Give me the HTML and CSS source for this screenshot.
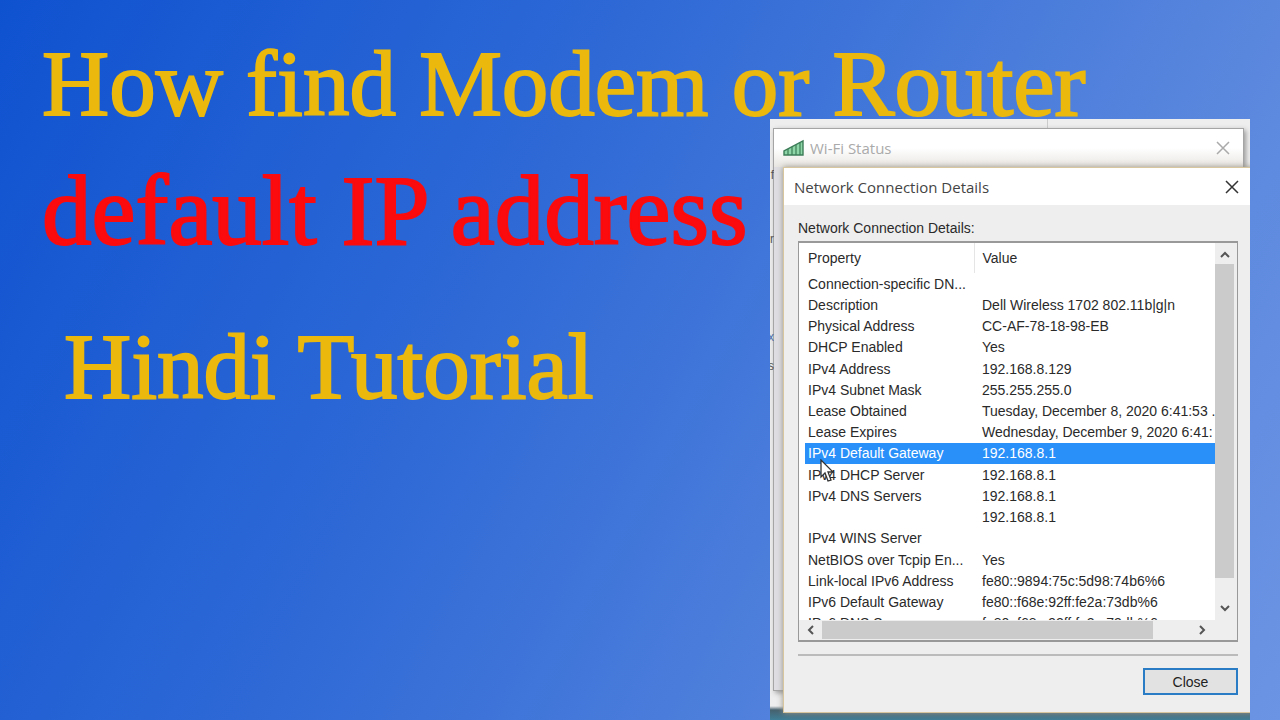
FILE: index.html
```html
<!DOCTYPE html>
<html lang="en">

<head>
    <meta charset="UTF-8">
    <meta name="viewport" content="width=device-width, initial-scale=1.0">
    <title>How find Modem or Router default IP address</title>
    <link rel="stylesheet" href="styles.css">
</head>

<body>
    <h1 class="headline">How find Modem or Router</h1>
    <main class="content">
        <div class="titles">
            <h2 class="red">default IP address</h2>
            <h2 class="tutorial">Hindi Tutorial</h2>
        </div>

        <div class="shot">
            <span class="behind-line"></span>
            <span class="behind b1">f</span>
            <span class="behind b2">r</span>
            <span class="behind b3">x</span>
            <span class="behind b4">s</span>

            <!-- window at the back -->
            <section class="wifi">
                <header class="wifi-bar">
                    <svg class="signal" viewBox="0 0 22 18" width="22" height="18">
                        <path d="M1 16V12L20 2V16Z" fill="#8ed6a8" stroke="#3c7d58" stroke-width="1.4" />
                        <path d="M5 10V16M9 8V16M13 6V16M17 4V16" stroke="#3c7d58" stroke-width="1.2" />
                    </svg>
                    <span>Wi-Fi Status</span>
                    <button class="x" type="button" aria-label="Close status">
                        <svg viewBox="0 0 14 14" width="14" height="14"><path d="M1 1L13 13M13 1L1 13" /></svg>
                    </button>
                </header>
            </section>

            <!-- details dialog -->
            <section class="dialog">
                <header class="dialog-bar">
                    <span>Network Connection Details</span>
                    <button class="x" type="button" aria-label="Close dialog">
                        <svg viewBox="0 0 14 14" width="14" height="14"><path d="M1 1L13 13M13 1L1 13" /></svg>
                    </button>
                </header>
                <div class="dialog-body">
                    <p id="details">Network Connection Details:</p>
                    <div class="list">
                        <div class="rows">
                            <table aria-labelledby="details">
                                <thead>
                                    <tr><th>Property</th><th>Value</th></tr>
                                </thead>
                                <tbody>
                                    <tr><td>Connection-specific DN...</td><td></td></tr>
                                    <tr><td>Description</td><td>Dell Wireless 1702 802.11b|g|n</td></tr>
                                    <tr><td>Physical Address</td><td>CC-AF-78-18-98-EB</td></tr>
                                    <tr><td>DHCP Enabled</td><td>Yes</td></tr>
                                    <tr><td>IPv4 Address</td><td>192.168.8.129</td></tr>
                                    <tr><td>IPv4 Subnet Mask</td><td>255.255.255.0</td></tr>
                                    <tr><td>Lease Obtained</td><td>Tuesday, December 8, 2020 6:41:53 .</td></tr>
                                    <tr><td>Lease Expires</td><td>Wednesday, December 9, 2020 6:41:</td></tr>
                                    <tr class="selected"><td>IPv4 Default Gateway</td><td>192.168.8.1</td></tr>
                                    <tr><td>IPv4 DHCP Server</td><td>192.168.8.1</td></tr>
                                    <tr><td>IPv4 DNS Servers</td><td>192.168.8.1</td></tr>
                                    <tr><td></td><td>192.168.8.1</td></tr>
                                    <tr><td>IPv4 WINS Server</td><td></td></tr>
                                    <tr><td>NetBIOS over Tcpip En...</td><td>Yes</td></tr>
                                    <tr><td>Link-local IPv6 Address</td><td>fe80::9894:75c:5d98:74b6%6</td></tr>
                                    <tr><td>IPv6 Default Gateway</td><td>fe80::f68e:92ff:fe2a:73db%6</td></tr>
                                    <tr><td>IPv6 DNS Server</td><td>fe80::f68e:92ff:fe2a:73db%6</td></tr>
                                </tbody>
                            </table>
                        </div>
                        <div class="vbar">
                            <svg viewBox="0 0 12 8" width="12" height="8"><path d="M2 6L6 2L10 6" /></svg>
                            <div class="vthumb"></div>
                            <svg viewBox="0 0 12 8" width="12" height="8"><path d="M2 2L6 6L10 2" /></svg>
                        </div>
                        <div class="hbar">
                            <svg viewBox="0 0 8 12" width="8" height="12"><path d="M6 2L2 6L6 10" /></svg>
                            <div class="hthumb"></div>
                            <svg viewBox="0 0 8 12" width="8" height="12"><path d="M2 2L6 6L2 10" /></svg>
                        </div>
                    </div>
                    <hr>
                    <button class="close" type="button">Close</button>
                </div>
                <svg class="cursor" viewBox="0 0 16 24" width="16" height="24">
                    <path d="M2 1V18L6 14L9 22L12 21L9 13H14Z" fill="#fff" stroke="#333" stroke-width="1.3" />
                </svg>
            </section>
        </div>
    </main>
</body>

</html>
```
FILE: styles.css
```css
* {
    box-sizing: border-box;
}

body {
    margin: 0;
    min-height: 100vh;
    display: flex;
    flex-direction: column;
    overflow: hidden;
    background: linear-gradient(118deg, #0f52d0 0%, #2e69d6 38%, #5b88de 78%, #6c94e4 100%);
    font-family: "Liberation Sans", sans-serif;
}

h1,
h2 {
    margin: 0;
    font-family: "Liberation Serif", serif;
    font-weight: normal;
    white-space: nowrap;
    color: #ebb90d;
    -webkit-text-stroke: 2px currentColor;
}

.headline {
    height: 119px;
    padding: 32px 0 0 42px;
    font-size: 93px;
    line-height: 104px;
}

.content {
    flex: 1;
    display: flex;
    justify-content: space-between;
    padding-right: 30px;
}

.titles {
    width: 0;
    padding: 36px 0 0 42px;
}

.titles .red {
    font-size: 99px;
    line-height: 112px;
    color: #fb0b0d;
}

.tutorial {
    padding: 48px 0 0 22px;
    font-size: 93px;
    line-height: 104px;
}

/* picture of the two windows */
.shot {
    position: relative;
    flex: 0 0 480px;
    min-height: 601px;
    overflow: hidden;
    background: linear-gradient(to top, #3f7f98 0, #46616e 10px, #eee 14px);
}

.behind {
    position: absolute;
    z-index: 1;
    left: 0;
    width: 4px;
    overflow: hidden;
    direction: rtl;
    font-size: 12px;
    line-height: 16px;
    color: #555;
}

.b1 { top: 48px; }
.b2 { top: 112px; }
.b3 { top: 210px; color: #4b6fae; }
.b4 { top: 239px; }

.behind-line {
    position: absolute;
    left: 277px;
    top: 0;
    width: 1px;
    height: 10px;
    background: #ccc;
}

.wifi {
    position: absolute;
    inset: 9px 6px 29px 3px;
    border: 1px solid #a5a5a5;
    background: #dedee2;
    box-shadow: 2px 2px 5px #999;
}

.wifi-bar {
    display: flex;
    align-items: center;
    height: 38px;
    padding: 0 13px 0 9px;
    background: linear-gradient(#fff 50%, #e8e6e2);
    font-family: "Open Sans", sans-serif;
    font-size: 15px;
    color: #aaa;
}

.signal {
    margin-right: 5px;
}

.x {
    display: flex;
    margin-left: auto;
    padding: 0;
    border: 0;
    background: none;
    color: #333;
}

.wifi .x {
    color: #aaa;
}

.x path {
    fill: none;
    stroke: currentColor;
    stroke-width: 1.5;
}

.dialog {
    position: absolute;
    z-index: 2;
    inset: 48px -4px 7px 13px;
    display: flex;
    flex-direction: column;
    border: 1px solid #d8c79e;
    background: #eee;
    box-shadow: 0 0 6px #9a9488;
    color: #2a2a2a;
}

.dialog-bar {
    display: flex;
    align-items: center;
    flex: 0 0 37px;
    padding: 0 14px 0 10px;
    background: #fff;
    font-family: "Open Sans", sans-serif;
    font-size: 15px;
    color: #444;
}

.dialog-body {
    flex: 1;
    display: flex;
    flex-direction: column;
    padding: 14px 15px 0 14px;
    font-size: 14px;
}

.dialog-body p {
    margin: 0;
    line-height: 18px;
}

.list {
    display: grid;
    grid-template-columns: 1fr 19px;
    grid-template-rows: 377px 20px;
    margin-top: 4px;
    padding-right: 3px;
    border: 2px solid #999;
    border-width: 2px 1px;
    background: linear-gradient(to left, #eee 22px, #fff 22px);
}

.rows {
    overflow: hidden;
    padding-left: 6px;
}

.list table {
    width: 100%;
    height: 391px;
    table-layout: fixed;
    border-collapse: collapse;
    line-height: 20px;
}

.list th,
.list td {
    height: 21px;
    padding: 0 0 0 3px;
    font-weight: normal;
    text-align: left;
    white-space: nowrap;
    overflow: hidden;
}

.list th {
    height: 30px;
}

.list th:first-child {
    width: 169px;
    border-right: 1px solid #e5e5e5;
}

.list td + td,
.list th + th {
    padding-left: 8px;
}

.selected {
    background: #2990fa;
    color: #fff;
}

.vbar,
.hbar {
    display: flex;
    align-items: center;
    background: #eee;
}

.vbar {
    flex-direction: column;
    padding: 8px 0;
}

.vthumb {
    flex: 0 0 314px;
    width: 100%;
    margin: 5px 0 auto;
    background: #cbcbcb;
}

.hbar {
    grid-column: 1 / -1;
    padding: 0 28px 0 8px;
}

.hthumb {
    flex: 0 0 331px;
    height: 18px;
    margin: 0 auto 0 7px;
    background: #cbcbcb;
}

.vbar path,
.hbar path {
    fill: none;
    stroke: #555;
    stroke-width: 2;
}

.dialog hr {
    width: 100%;
    height: 2px;
    margin: 12px 0;
    border: 0;
    background: #bbb;
}

.close {
    align-self: flex-end;
    width: 95px;
    height: 27px;
    border: 2px solid #2a7cc4;
    background: #e2e2e2;
    font: 14px "Liberation Sans", sans-serif;
    color: #222;
}

.cursor {
    position: absolute;
    left: 35px;
    top: 291px;
}
```
